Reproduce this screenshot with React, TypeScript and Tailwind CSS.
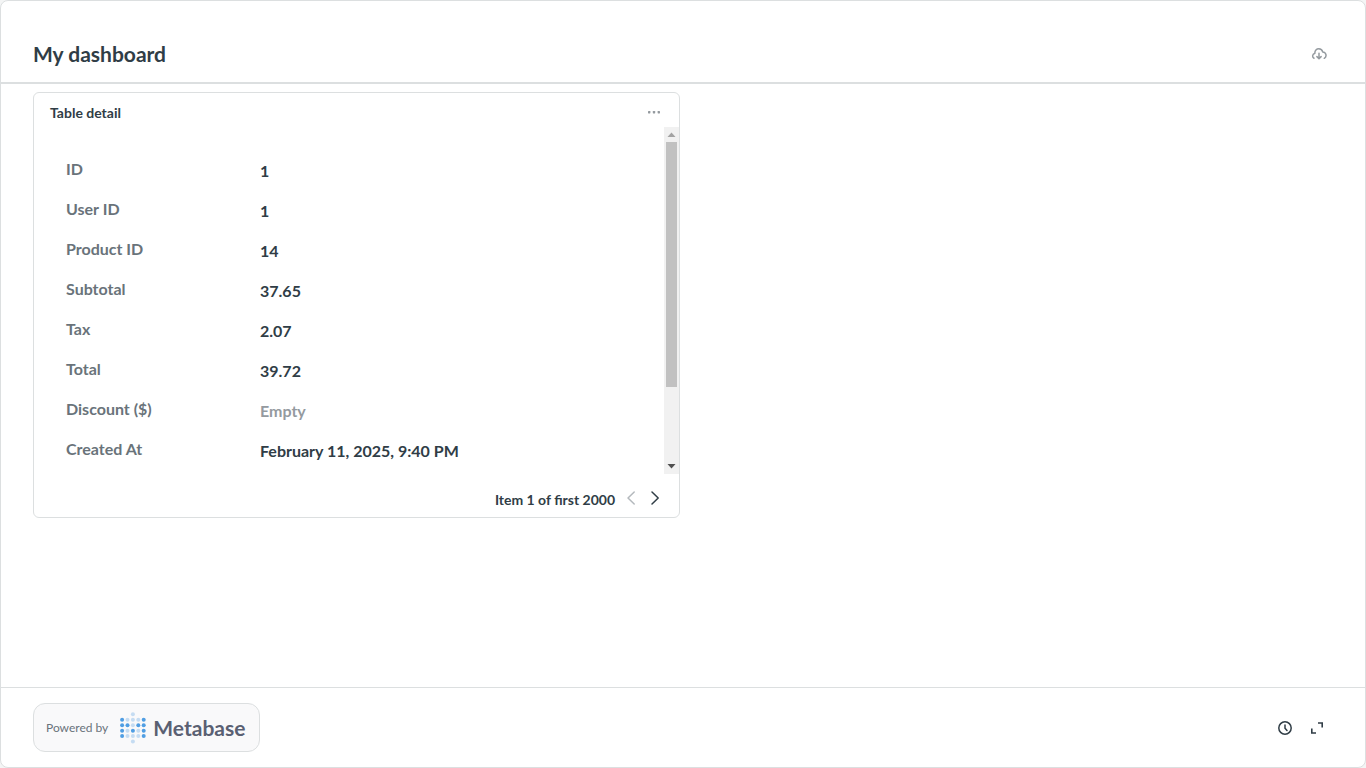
import React from "react";

type Detail = { label: string; value: string | null };

const details: Detail[] = [
  { label: "ID", value: "1" },
  { label: "User ID", value: "1" },
  { label: "Product ID", value: "14" },
  { label: "Subtotal", value: "37.65" },
  { label: "Tax", value: "2.07" },
  { label: "Total", value: "39.72" },
  { label: "Discount ($)", value: null },
  { label: "Created At", value: "February 11, 2025, 9:40 PM" },
];

const logoRows = ["..o..", "xooox", "xxoxx", "xoxox", "xooox", "..o.."];

function MetabaseMark() {
  return (
    <svg width="27" height="32" viewBox="0 0 27 32" aria-hidden="true">
      {logoRows.flatMap((row, y) =>
        row.split("").map((dot, x) =>
          dot === "." ? null : (
            <circle
              key={`${x}-${y}`}
              cx={2.1 + x * 5.4}
              cy={2.3 + y * 5.45}
              r={2}
              fill={dot === "x" ? "#509ee3" : "#c5dcf2"}
            />
          ),
        ),
      )}
    </svg>
  );
}

function Header() {
  return (
    <header className="flex items-center justify-between border-b-2 border-[#dcdfe0] px-8 pt-6">
      <h1 className="pt-3 pb-3 text-[21px] leading-[33px] font-bold">My dashboard</h1>
      <button aria-label="Download as PDF" className="mr-1.5">
        <svg width="16" height="16" viewBox="0 0 16 16" fill="none" stroke="#949a9f" strokeWidth="1.5" strokeLinecap="round" strokeLinejoin="round">
          <path d="M3 12.3C1.1 11.4 1 8 3.9 7.2 3.6 4.6 5.6 2.8 7.8 2.8c2 0 3.4 1.2 3.9 3.1 3.7.3 4.4 4.8 1.6 6.4" />
          <path d="M8 7.2v5.2M5.9 10.6 8 12.7l2.1-2.1" />
        </svg>
      </button>
    </header>
  );
}

function ScrollTrack() {
  return (
    <div aria-hidden="true" className="flex w-[15px] shrink-0 flex-col items-center bg-[#f1f1f1]">
      <svg width="15" height="15" viewBox="0 0 15 15" fill="#a3a3a3"><path d="M3.5 10 7.5 5.5 11.5 10z" /></svg>
      <div className="flex w-[11px] flex-1 flex-col">
        <div className="h-[77.3%] bg-[#c1c1c1]" />
      </div>
      <svg width="15" height="15" viewBox="0 0 15 15" fill="#505050"><path d="M3.5 5h8L7.5 9.5z" /></svg>
    </div>
  );
}

function DetailCard() {
  return (
    <section className="flex h-[426px] flex-col rounded-md border border-[#dcdfe0] bg-white">
      <div className="flex h-[34px] shrink-0 items-end justify-between px-4">
        <h2 className="text-sm leading-7 font-bold">Table detail</h2>
        <button aria-label="Card options" className="pb-[7px]">
          <svg width="18" height="16" viewBox="0 0 18 16" fill="#949a9f">
            <rect x="3" y="7" width="2.4" height="2.4" rx=".6" />
            <rect x="7.8" y="7" width="2.4" height="2.4" rx=".6" />
            <rect x="12.6" y="7" width="2.4" height="2.4" rx=".6" />
          </svg>
        </button>
      </div>
      <div className="flex min-h-0 flex-1">
        <dl className="min-w-0 flex-1 overflow-hidden pt-8 pr-4 pl-8 text-base leading-5 font-bold">
          {details.map(({ label, value }) => (
            <div key={label} className="grid h-10 grid-cols-3">
              <dt className="text-[#69737a]">{label}</dt>
              <dd className={value ? "col-span-2 pt-0.5" : "col-span-2 pt-0.5 text-[#949a9f]"}>{value ?? "Empty"}</dd>
            </div>
          ))}
        </dl>
        <ScrollTrack />
      </div>
      <div className="flex h-[43px] shrink-0 items-center justify-end gap-2 pr-4 text-sm font-bold">
        <span className="pt-2">Item 1 of first 2000</span>
        <button aria-label="Previous item" disabled className="pt-1">
          <svg width="16" height="16" viewBox="0 0 16 16" fill="none" stroke="#b4b9bd" strokeWidth="1.5" strokeLinecap="round" strokeLinejoin="round"><path d="M11.2 2 5 8l6.2 6" /></svg>
        </button>
        <button aria-label="Next item" className="pt-1">
          <svg width="16" height="16" viewBox="0 0 16 16" fill="none" stroke="#303d46" strokeWidth="1.5" strokeLinecap="round" strokeLinejoin="round"><path d="m5 2 6.2 6L5 14" /></svg>
        </button>
      </div>
    </section>
  );
}

function Footer() {
  return (
    <footer className="flex items-center justify-between border-t border-[#dcdfe0] px-8 py-[15px]">
      <a href="#metabase" className="flex h-[49px] items-center rounded-xl border border-[#dcdfe0] bg-[#f9f9fa] pr-3.5 pl-3">
        <span className="mr-3 text-xs text-[#69737a]">Powered by</span>
        <MetabaseMark />
        <span className="ml-1.5 text-[21px] leading-7 font-bold text-[#5a6072]">Metabase</span>
      </a>
      <div className="mr-2 flex items-center gap-4">
        <button aria-label="Auto-refresh">
          <svg width="16" height="16" viewBox="0 0 16 16" fill="none" stroke="#303d46" strokeWidth="1.5" strokeLinecap="round"><circle cx="8" cy="8" r="6.2" /><path d="M8 5v3.2l2 2.3" /></svg>
        </button>
        <button aria-label="Enter fullscreen">
          <svg width="16" height="16" viewBox="0 0 16 16" fill="none" stroke="#303d46" strokeWidth="1.6"><path d="M9 3h4.2v4.5M7 13H2.8V8.5" /></svg>
        </button>
      </div>
    </footer>
  );
}

export default function App() {
  return (
    <div className="bg-[#f4f5f5]">
      <div className="flex min-h-screen flex-col rounded-lg border border-[#dcdfe0] bg-white font-['Lato',sans-serif] text-[#303d46]">
        <Header />
        <main className="grid flex-1 grid-cols-2 content-start gap-1.5 px-8 pt-2">
          <DetailCard />
        </main>
        <Footer />
      </div>
    </div>
  );
}
